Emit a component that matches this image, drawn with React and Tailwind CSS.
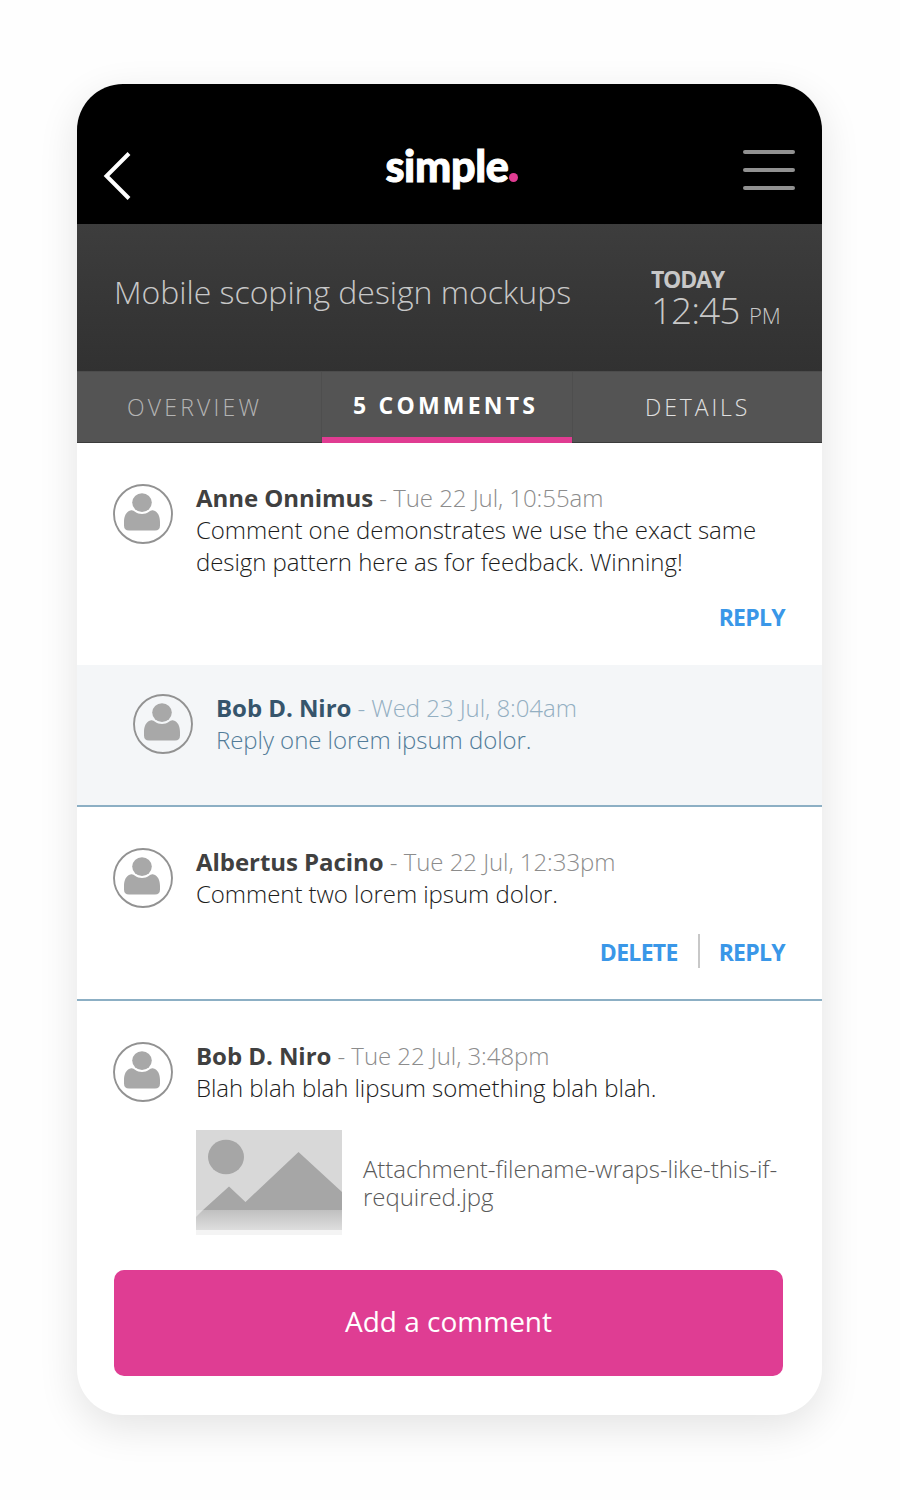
import React from 'react';

const COMMENTS = [
    {
        id: 1,
        author: 'Anne Onnimus',
        date: 'Tue 22 Jul, 10:55am',
        text: 'Comment one demonstrates we use the exact same design pattern here as for feedback. Winning!',
        actions: ['Reply'],
        layout: 'h-[222px] pt-[39px]',
    },
    {
        id: 2,
        author: 'Bob D. Niro',
        date: 'Wed 23 Jul, 8:04am',
        text: 'Reply one lorem ipsum dolor.',
        isReply: true,
        actions: [],
        layout: 'h-[142px] pt-[27px] border-b-2 border-[#8cafc4]',
    },
    {
        id: 3,
        author: 'Albertus Pacino',
        date: 'Tue 22 Jul, 12:33pm',
        text: 'Comment two lorem ipsum dolor.',
        actions: ['Delete', 'Reply'],
        layout: 'h-[194px] pt-[39px] border-b-2 border-[#8cafc4]',
    },
    {
        id: 4,
        author: 'Bob D. Niro',
        date: 'Tue 22 Jul, 3:48pm',
        text: 'Blah blah blah lipsum something blah blah.',
        attachment: 'Attachment-filename-wraps-like-this-if-required.jpg',
        actions: [],
        layout: 'h-[269px] pt-[39px]',
    },
];

const Avatar = () => (
    <svg className="mt-0.5 size-[60px] shrink-0" viewBox="0 0 60 60" fill="none">
        <circle cx="30" cy="30" r="29" stroke="#929292" strokeWidth="1.9" />
        <ellipse cx="29" cy="18.6" rx="9.8" ry="9.3" fill="#a8a8a8" />
        <path
            d="M17.5 26.500 C13 27.500 11 32.500 11 38 V41.500 Q11 46.500 16 46.500 H42 Q47 46.500 47 41.500 V38 C47 32.500 45 27.500 40.500 26.500 C38.500 26 37 27 36 27.800 C32 30.700 26 30.700 22 27.800 C21 27 19.500 26 17.500 26.500 Z"
            fill="#a8a8a8"
        />
    </svg>
);

const Thumbnail = () => (
    <svg className="h-[105px] w-[146px] shrink-0" viewBox="0 0 146 105">
        <defs>
            <linearGradient id="reflection" x1="0" y1="0" x2="0" y2="1">
                <stop offset="0" stopColor="#c0c0c0" />
                <stop offset="1" stopColor="#dedede" />
            </linearGradient>
        </defs>
        <rect width="146" height="80" fill="#d8d8d8" />
        <ellipse cx="30" cy="27" rx="18" ry="17.300" fill="#a6a6a6" />
        <path d="M7 80 L33 56.500 L49.500 72 L102.500 22 L146 62 V80 Z" fill="#a6a6a6" />
        <rect y="80" width="146" height="20" fill="url(#reflection)" />
        <path d="M0 80 H7 L0 87 Z" fill="#e2e2e2" />
        <rect y="100" width="146" height="5" fill="#f4f4f4" />
    </svg>
);

const Header = () => (
    <header className="flex h-[140px] items-start justify-between bg-black pr-[27px] pl-[26px]">
        <svg className="mt-[67px] h-[50px] w-[30px]" viewBox="0 0 30 50" fill="none" stroke="#fff" strokeWidth="4">
            <path d="M26 2.500 L3.500 25 L26 47.500" />
        </svg>
        <div className="mt-[55px] ml-[27px] flex items-baseline font-['Lato'] text-[43px] leading-[54px] font-black tracking-[-0.3px] text-white [-webkit-text-stroke:1px_white]">
            simple
            <span className="size-[9px] rounded-full bg-[#e03c92]" />
        </div>
        <div className="mt-[66px] flex w-[52px] flex-col gap-3.5">
            <span className="h-1 rounded-full bg-[#919191]" />
            <span className="h-1 rounded-full bg-[#919191]" />
            <span className="h-1 rounded-full bg-[#919191]" />
        </div>
    </header>
);

const TitleBar = () => (
    <div className="flex h-[147px] justify-between bg-linear-to-b from-[#3d3d3d] to-[#313131] pl-[37px] text-[#c8c8c8]">
        <h1 className="mt-[45px] text-[32px] leading-[46px] font-light tracking-[-0.03px] whitespace-nowrap">Mobile scoping design mockups</h1>
        <div className="mt-[41px] w-[171px] whitespace-nowrap">
            <div className="text-[23px] leading-[28px] font-bold tracking-[-1.2px]">TODAY</div>
            <div className="text-[37px] leading-[34px] font-light tracking-[-1px]">
                12:45 <span className="ml-px text-[22px] tracking-normal">PM</span>
            </div>
        </div>
    </div>
);

const Tabs = () => (
    <nav className="flex h-[72px] border-t border-b border-t-[#4c4c4c] border-b-[#3b3b3b] bg-[#545454] text-[23px] leading-[71px] whitespace-nowrap">
        <div className="w-[245px] border-r border-[#4e4e4e] pl-[50px] font-light tracking-[3.2px] text-[#b4b4b4]">OVERVIEW</div>
        <div className="-mb-px w-[250px] border-b-[6px] border-[#e03c92] pl-[31px] leading-[67px] font-bold tracking-[3.2px] text-white">
            5 COMMENTS
        </div>
        <div className="flex-1 border-l border-[#4e4e4e] pl-[72px] font-light tracking-[2.9px] text-[#e0e0e0]">DETAILS</div>
    </nav>
);

const Comment = ({ comment }) => {
    const { author, date, text, isReply, actions, attachment, layout } = comment;

    return (
        <article className={`flex gap-[23px] pr-9 ${isReply ? 'bg-[#f4f6f8] pl-14' : 'pl-9'} ${layout}`}>
            <Avatar />
            <div className="flex-1 text-[24px] leading-8 tracking-[-0.05px]">
                <div className={`whitespace-nowrap font-light ${isReply ? 'text-[#93afc2]' : 'text-[#8c8c8c]'}`}>
                    <span className={`font-bold ${isReply ? 'text-[#36556c]' : 'text-[#404040]'}`}>{author}</span> - {date}
                </div>
                <p className={`font-light ${isReply ? 'text-[#527c99]' : 'text-[#1c1c1c]'}`}>{text}</p>
                {actions.length > 0 && (
                    <div
                        className={`flex items-center justify-end pr-px text-[23px] leading-[34px] font-bold tracking-[-0.7px] text-[#3a97e8] uppercase ${
                            actions.length > 1 ? 'mt-6' : 'mt-[21px]'
                        }`}
                    >
                        {actions.map((action, i) => (
                            <span key={action} className={i > 0 ? 'ml-5 border-l-2 border-[#c8c8c8] pl-[19px]' : ''}>
                                <span className="relative top-px">{action}</span>
                            </span>
                        ))}
                    </div>
                )}
                {attachment && (
                    <div className="mt-[26px] flex gap-[21px]">
                        <Thumbnail />
                        <p className="-mr-2 mt-[25px] flex-1 text-[24px] leading-7 font-light text-[#595959]">{attachment}</p>
                    </div>
                )}
            </div>
        </article>
    );
};

const App = () => (
    <div className="h-[1500px] w-[900px] bg-[#fefefe] pt-[84px] pl-[77px] font-['Open_Sans',sans-serif]">
        <main className="h-[1331px] w-[745px] overflow-hidden rounded-[46px] bg-white shadow-[0_12px_40px_rgba(0,0,0,0.11)]">
            <Header />
            <TitleBar />
            <Tabs />
            {COMMENTS.map((comment) => (
                <Comment key={comment.id} comment={comment} />
            ))}
            <button className="mx-[37px] block h-[106px] w-[669px] rounded-[10px] bg-[#df3d93] pb-1 text-[28px] text-white">
                Add a comment
            </button>
        </main>
    </div>
);

export default App;
